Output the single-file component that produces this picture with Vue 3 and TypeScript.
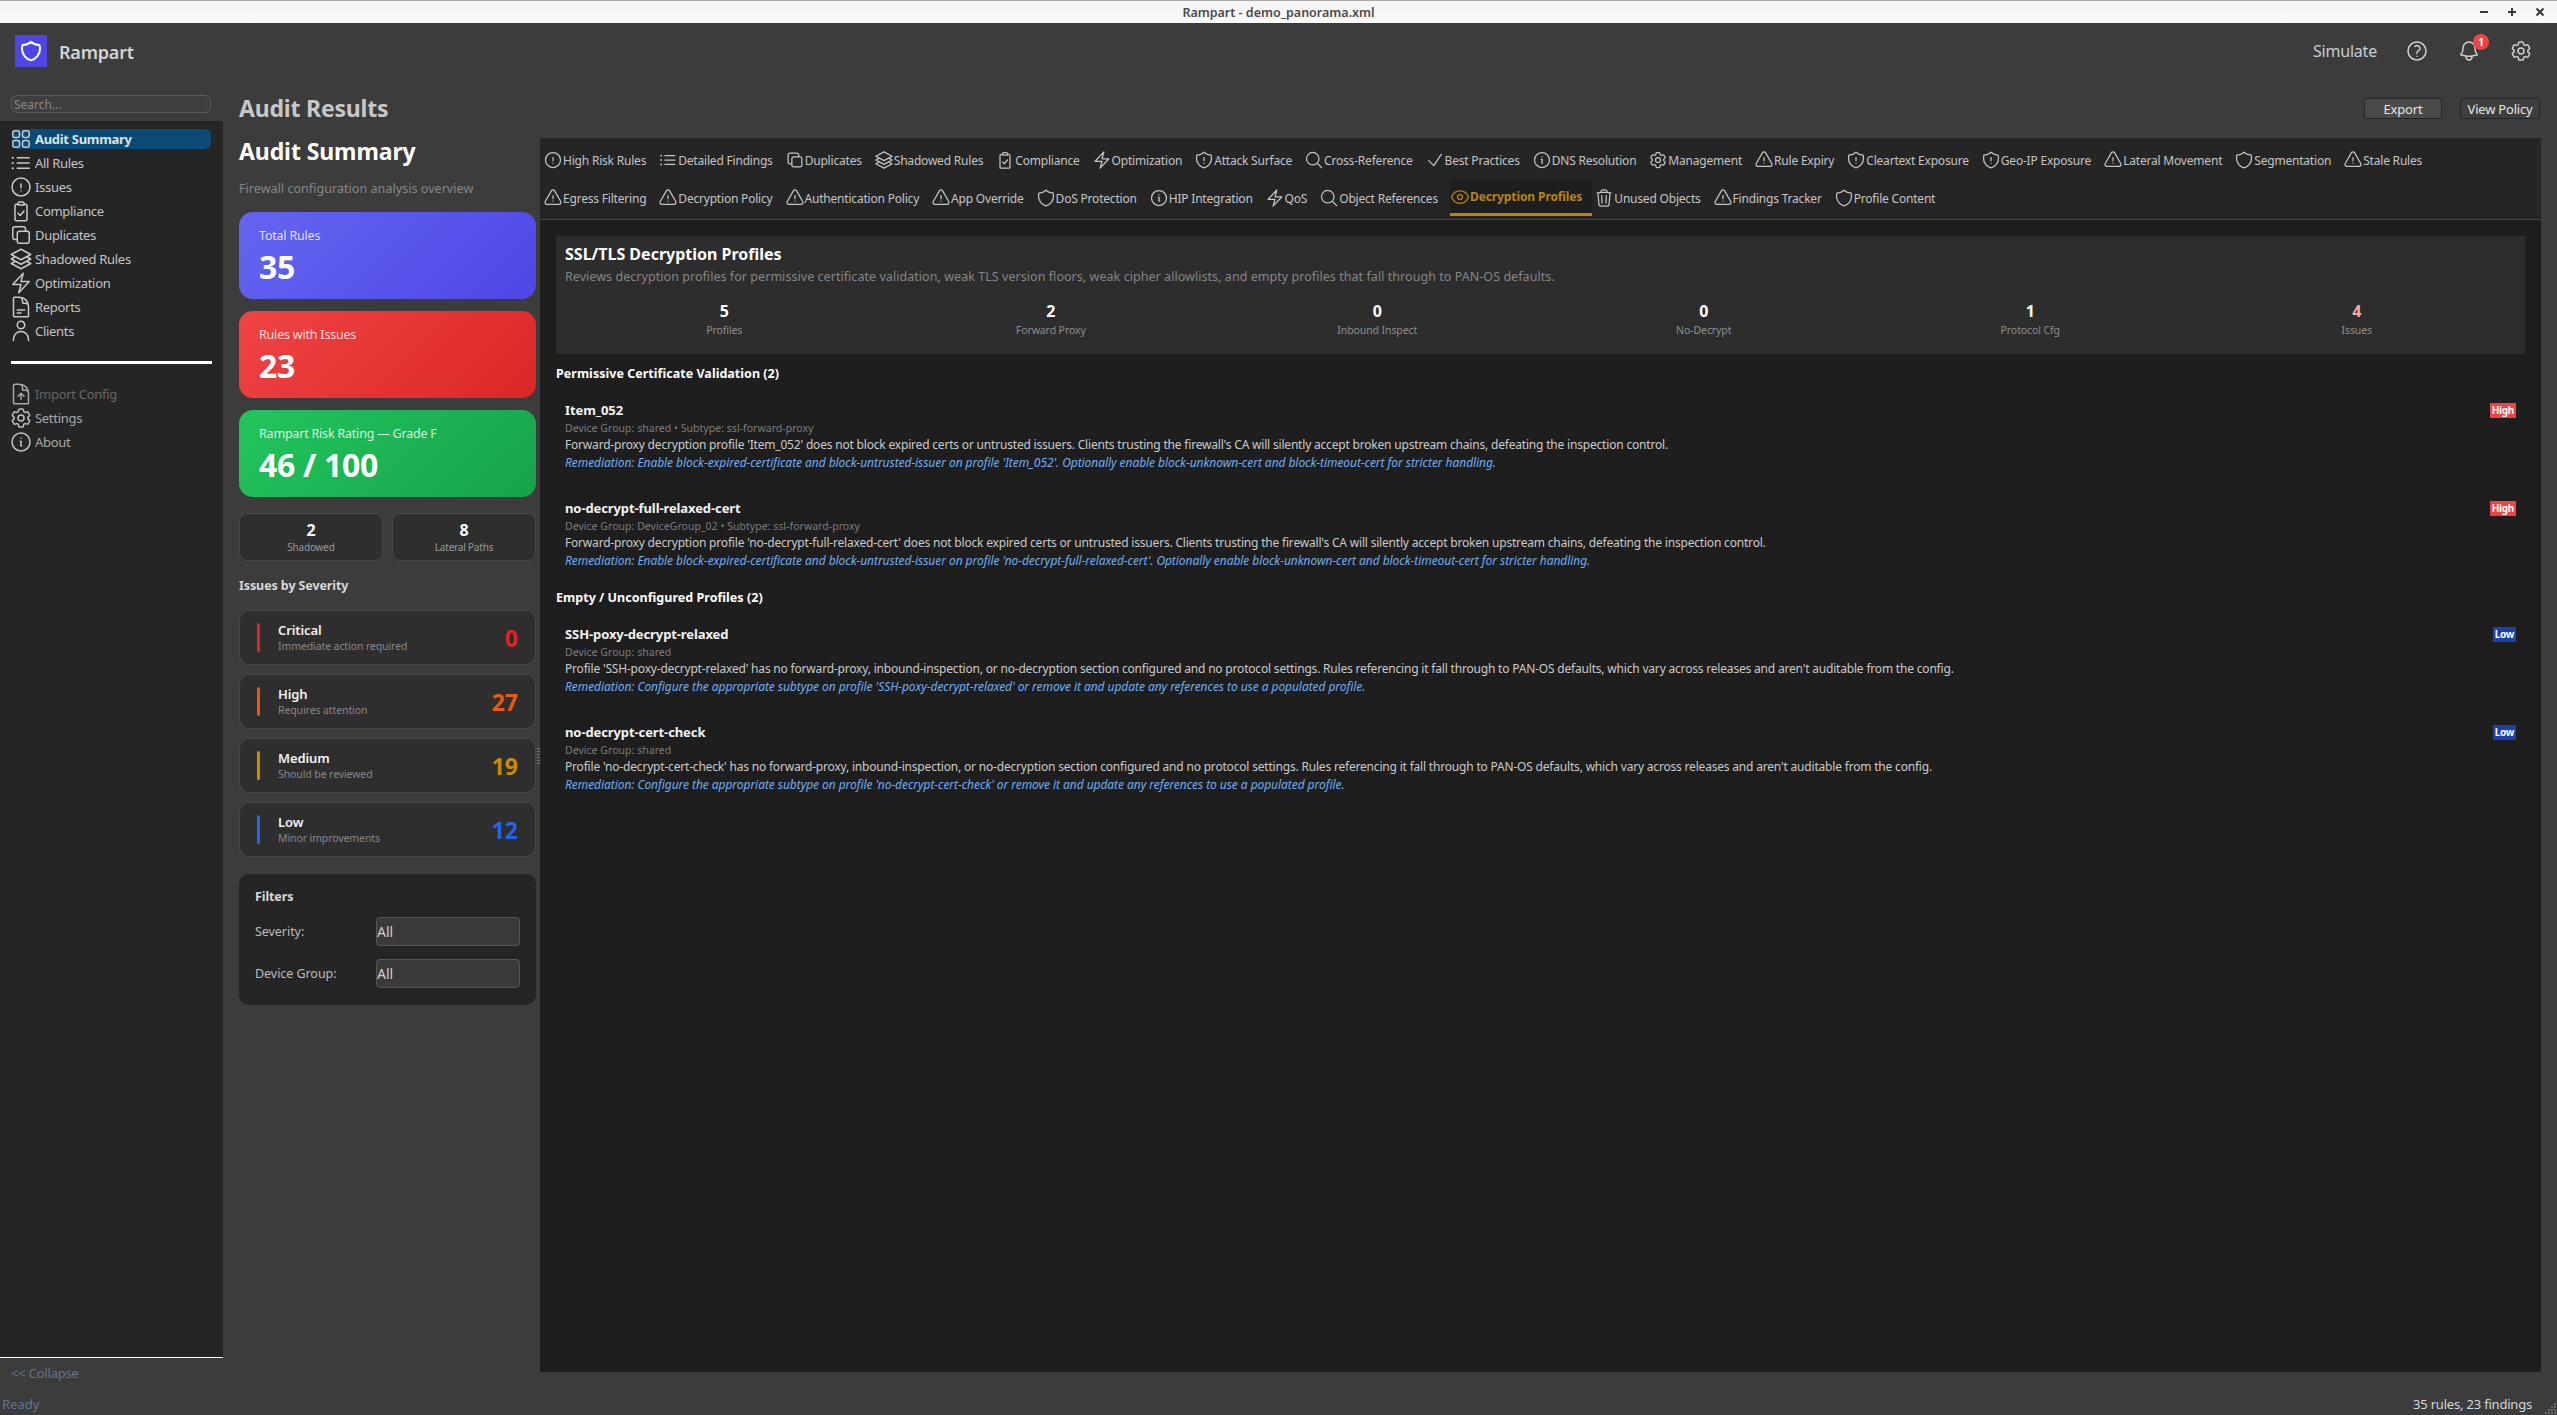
<script setup lang="ts">
interface NavItem {
  label: string
  icon: string
}
interface Tab {
  label: string
  icon: string
  active?: boolean
}
interface Finding {
  name: string
  meta: string
  text: string
  fix: string
  level: 'High' | 'Low'
}

const icons: Record<string, string> = {
  grid: 'M3.75 6A2.25 2.25 0 0 1 6 3.75h2.25A2.25 2.25 0 0 1 10.5 6v2.25a2.25 2.25 0 0 1-2.25 2.25H6a2.25 2.25 0 0 1-2.25-2.25V6ZM3.75 15.75A2.25 2.25 0 0 1 6 13.5h2.25a2.25 2.25 0 0 1 2.25 2.25V18a2.25 2.25 0 0 1-2.25 2.25H6A2.25 2.25 0 0 1 3.75 18v-2.25ZM13.5 6a2.25 2.25 0 0 1 2.25-2.25H18A2.25 2.25 0 0 1 20.25 6v2.25A2.25 2.25 0 0 1 18 10.5h-2.25a2.25 2.25 0 0 1-2.25-2.25V6ZM13.5 15.75a2.25 2.25 0 0 1 2.25-2.25H18a2.25 2.25 0 0 1 2.25 2.25V18A2.25 2.25 0 0 1 18 20.25h-2.25A2.25 2.25 0 0 1 13.5 18v-2.25Z',
  list: 'M8.25 6.75h12M8.25 12h12m-12 5.25h12M3.75 6.75h.007v.008H3.75V6.75Zm.375 0a.375.375 0 1 1-.75 0 .375.375 0 0 1 .75 0ZM3.75 12h.007v.008H3.75V12Zm.375 0a.375.375 0 1 1-.75 0 .375.375 0 0 1 .75 0Zm-.375 5.25h.007v.008H3.75v-.008Zm.375 0a.375.375 0 1 1-.75 0 .375.375 0 0 1 .75 0Z',
  alert: 'M12 9v3.75m9-.75a9 9 0 1 1-18 0 9 9 0 0 1 18 0Zm-9 3.75h.008v.008H12v-.008Z',
  clipboard: 'M9 5.25H7.5A1.5 1.5 0 0 0 6 6.75v13.5a1.5 1.5 0 0 0 1.5 1.5h9a1.5 1.5 0 0 0 1.5-1.5V6.75a1.5 1.5 0 0 0-1.5-1.5H15M9 4.5A1.5 1.5 0 0 1 10.5 3h3A1.5 1.5 0 0 1 15 4.5V6H9V4.5ZM9 14.25l2.25 2.25 3.75-4.5',
  copy: 'M16.5 8.25V6a2.25 2.25 0 0 0-2.25-2.25H6A2.25 2.25 0 0 0 3.75 6v8.25A2.25 2.25 0 0 0 6 16.5h2.25m8.25-8.25H18a2.25 2.25 0 0 1 2.25 2.25V18A2.25 2.25 0 0 1 18 20.25h-7.5A2.25 2.25 0 0 1 8.25 18v-1.5m8.25-8.25h-6a2.25 2.25 0 0 0-2.25 2.25v6',
  stack: 'M6.429 9.75 2.25 12l4.179 2.25m0-4.5 5.571 3 5.571-3m-11.142 0L2.25 7.5 12 2.25l9.75 5.25-4.179 2.25m0 0L21.75 12l-4.179 2.25m0 0 4.179 2.25L12 21.75 2.25 16.5l4.179-2.25m11.142 0-5.571 3-5.571-3',
  bolt: 'm3.75 13.5 10.5-11.25L12 10.5h8.25L9.75 21.75 12 13.5H3.75Z',
  doc: 'M19.5 14.25v-2.625a3.375 3.375 0 0 0-3.375-3.375h-1.5A1.125 1.125 0 0 1 13.5 7.125v-1.5a3.375 3.375 0 0 0-3.375-3.375H8.25m0 12.75h7.5m-7.5 3H12M10.5 2.25H5.625c-.621 0-1.125.504-1.125 1.125v17.25c0 .621.504 1.125 1.125 1.125h12.75c.621 0 1.125-.504 1.125-1.125V11.25a9 9 0 0 0-9-9Z',
  user: 'M15.75 6a3.75 3.75 0 1 1-7.5 0 3.75 3.75 0 0 1 7.5 0ZM4.5 21.5v-1.4a7.5 7.5 0 0 1 15 0v1.4',
  upload: 'M19.5 14.25v-2.625a3.375 3.375 0 0 0-3.375-3.375h-1.5A1.125 1.125 0 0 1 13.5 7.125v-1.5a3.375 3.375 0 0 0-3.375-3.375H8.25m6.75 12-3-3m0 0-3 3m3-3v6m-1.5-15H5.625c-.621 0-1.125.504-1.125 1.125v17.25c0 .621.504 1.125 1.125 1.125h12.75c.621 0 1.125-.504 1.125-1.125V11.25a9 9 0 0 0-9-9Z',
  cog: 'M9.594 3.94c.09-.542.56-.94 1.11-.94h2.593c.55 0 1.02.398 1.11.94l.213 1.281c.063.374.313.686.645.87.074.04.147.083.22.127.325.196.72.257 1.075.124l1.217-.456a1.125 1.125 0 0 1 1.37.49l1.296 2.247a1.125 1.125 0 0 1-.26 1.431l-1.003.827c-.293.241-.438.613-.43.992a7.723 7.723 0 0 1 0 .255c-.008.378.137.75.43.991l1.004.827c.424.35.534.955.26 1.43l-1.298 2.247a1.125 1.125 0 0 1-1.369.491l-1.217-.456c-.355-.133-.75-.072-1.076.124a6.47 6.47 0 0 1-.22.128c-.331.183-.581.495-.644.869l-.213 1.281c-.09.543-.56.94-1.11.94h-2.594c-.55 0-1.019-.398-1.11-.94l-.213-1.281c-.062-.374-.312-.686-.644-.87a6.52 6.52 0 0 1-.22-.127c-.325-.196-.72-.257-1.076-.124l-1.217.456a1.125 1.125 0 0 1-1.369-.49l-1.297-2.247a1.125 1.125 0 0 1 .26-1.431l1.004-.827c.292-.24.437-.613.43-.991a6.932 6.932 0 0 1 0-.255c.007-.38-.138-.751-.43-.992l-1.004-.827a1.125 1.125 0 0 1-.26-1.43l1.297-2.247a1.125 1.125 0 0 1 1.37-.491l1.216.456c.356.133.751.072 1.076-.124.072-.044.146-.086.22-.128.332-.183.582-.495.644-.869l.214-1.28ZM15 12a3 3 0 1 1-6 0 3 3 0 0 1 6 0Z',
  info: 'm11.25 11.25.041-.02a.75.75 0 0 1 1.063.852l-.708 2.836a.75.75 0 0 0 1.063.853l.041-.021M21 12a9 9 0 1 1-18 0 9 9 0 0 1 18 0Zm-9-3.75h.008v.008H12V8.25Z',
  shieldAlert: 'M12 9v3.75m0-10.036A11.959 11.959 0 0 1 3.598 6 11.99 11.99 0 0 0 3 9.75c0 5.592 3.824 10.29 9 11.622 5.176-1.332 9-6.03 9-11.622 0-1.31-.21-2.57-.598-3.75h-.152c-3.196 0-6.1-1.25-8.25-3.286Zm0 13.036h.008v.008H12v-.008Z',
  shield: 'M12 2.714A11.959 11.959 0 0 1 3.598 6 11.99 11.99 0 0 0 3 9.749c0 5.592 3.824 10.29 9 11.623 5.176-1.332 9-6.03 9-11.622 0-1.31-.21-2.571-.598-3.751h-.152c-3.196 0-6.1-1.248-8.25-3.285Z',
  search: 'm21 21-5.197-5.197m0 0A7.5 7.5 0 1 0 5.196 5.196a7.5 7.5 0 0 0 10.607 10.607Z',
  check: 'm4.5 12.75 6 6 9-13.5',
  warn: 'M12 9v3.75m-9.303 3.376c-.866 1.5.217 3.374 1.948 3.374h14.71c1.73 0 2.813-1.874 1.948-3.374L13.949 3.378c-.866-1.5-3.032-1.5-3.898 0L2.697 16.126ZM12 15.75h.007v.008H12v-.008Z',
  eye: 'M2.036 12.322a1.012 1.012 0 0 1 0-.639C3.423 7.51 7.36 4.5 12 4.5c4.638 0 8.573 3.007 9.963 7.178.07.207.07.431 0 .639C20.577 16.49 16.64 19.5 12 19.5c-4.638 0-8.573-3.007-9.963-7.178ZM15 12a3 3 0 1 1-6 0 3 3 0 0 1 6 0Z',
  trash: 'm14.74 9-.346 9m-4.788 0L9.26 9m9.968-3.21c.342.052.682.107 1.022.166m-1.022-.165L18.16 19.673a2.25 2.25 0 0 1-2.244 2.077H8.084a2.25 2.25 0 0 1-2.244-2.077L4.772 5.79m14.456 0a48.108 48.108 0 0 0-3.478-.397m-12 .562c.34-.059.68-.114 1.022-.165m0 0a48.11 48.11 0 0 1 3.478-.397m7.5 0v-.916c0-1.18-.91-2.164-2.09-2.201a51.964 51.964 0 0 0-3.32 0c-1.18.037-2.09 1.022-2.09 2.201v.916m7.5 0a48.667 48.667 0 0 0-7.5 0',
  help: 'M9.879 7.519c1.171-1.025 3.071-1.025 4.242 0 1.172 1.025 1.172 2.687 0 3.712-.203.179-.43.326-.67.442-.745.361-1.45.999-1.45 1.827v.75M21 12a9 9 0 1 1-18 0 9 9 0 0 1 18 0Zm-9 5.25h.008v.008H12v-.008Z',
  bell: 'M14.857 17.082a23.848 23.848 0 0 0 5.454-1.31A8.967 8.967 0 0 1 18 9.75V9A6 6 0 0 0 6 9v.75a8.967 8.967 0 0 1-2.312 6.022c1.733.64 3.56 1.085 5.455 1.31m5.714 0a24.255 24.255 0 0 1-5.714 0m5.714 0a3 3 0 1 1-5.714 0',
}

const navMain: NavItem[] = [
  { label: 'All Rules', icon: 'list' },
  { label: 'Issues', icon: 'alert' },
  { label: 'Compliance', icon: 'clipboard' },
  { label: 'Duplicates', icon: 'copy' },
  { label: 'Shadowed Rules', icon: 'stack' },
  { label: 'Optimization', icon: 'bolt' },
  { label: 'Reports', icon: 'doc' },
  { label: 'Clients', icon: 'user' },
]

const tabRows: Tab[][] = [
  [
    { label: 'High Risk Rules', icon: 'alert' },
    { label: 'Detailed Findings', icon: 'list' },
    { label: 'Duplicates', icon: 'copy' },
    { label: 'Shadowed Rules', icon: 'stack' },
    { label: 'Compliance', icon: 'clipboard' },
    { label: 'Optimization', icon: 'bolt' },
    { label: 'Attack Surface', icon: 'shieldAlert' },
    { label: 'Cross-Reference', icon: 'search' },
    { label: 'Best Practices', icon: 'check' },
    { label: 'DNS Resolution', icon: 'info' },
    { label: 'Management', icon: 'cog' },
    { label: 'Rule Expiry', icon: 'warn' },
    { label: 'Cleartext Exposure', icon: 'shieldAlert' },
    { label: 'Geo-IP Exposure', icon: 'shieldAlert' },
    { label: 'Lateral Movement', icon: 'warn' },
    { label: 'Segmentation', icon: 'shield' },
    { label: 'Stale Rules', icon: 'warn' },
  ],
  [
    { label: 'Egress Filtering', icon: 'warn' },
    { label: 'Decryption Policy', icon: 'warn' },
    { label: 'Authentication Policy', icon: 'warn' },
    { label: 'App Override', icon: 'warn' },
    { label: 'DoS Protection', icon: 'shield' },
    { label: 'HIP Integration', icon: 'info' },
    { label: 'QoS', icon: 'bolt' },
    { label: 'Object References', icon: 'search' },
    { label: 'Decryption Profiles', icon: 'eye', active: true },
    { label: 'Unused Objects', icon: 'trash' },
    { label: 'Findings Tracker', icon: 'warn' },
    { label: 'Profile Content', icon: 'shield' },
  ],
]

const statCards = [
  { label: 'Total Rules', value: '35', cls: 'indigo' },
  { label: 'Rules with Issues', value: '23', cls: 'red' },
  { label: 'Rampart Risk Rating — Grade F', value: '46 / 100', cls: 'green' },
]

const severities = [
  { name: 'Critical', desc: 'Immediate action required', count: 0, color: '#dc2626' },
  { name: 'High', desc: 'Requires attention', count: 27, color: '#ea580c' },
  { name: 'Medium', desc: 'Should be reviewed', count: 19, color: '#ca8a04' },
  { name: 'Low', desc: 'Minor improvements', count: 12, color: '#2563eb' },
]

const profileStats = [
  { value: 5, label: 'Profiles' },
  { value: 2, label: 'Forward Proxy' },
  { value: 0, label: 'Inbound Inspect' },
  { value: 0, label: 'No-Decrypt' },
  { value: 1, label: 'Protocol Cfg' },
  { value: 4, label: 'Issues', warn: true },
]

const breakText = (p: string) =>
  `Forward-proxy decryption profile '${p}' does not block expired certs or untrusted issuers. Clients trusting the firewall's CA will silently accept broken upstream chains, defeating the inspection control.`
const breakFix = (p: string) =>
  `Remediation: Enable block-expired-certificate and block-untrusted-issuer on profile '${p}'. Optionally enable block-unknown-cert and block-timeout-cert for stricter handling.`
const emptyText = (p: string) =>
  `Profile '${p}' has no forward-proxy, inbound-inspection, or no-decryption section configured and no protocol settings. Rules referencing it fall through to PAN-OS defaults, which vary across releases and aren't auditable from the config.`
const emptyFix = (p: string) =>
  `Remediation: Configure the appropriate subtype on profile '${p}' or remove it and update any references to use a populated profile.`

const groups: { title: string; items: Finding[] }[] = [
  {
    title: 'Permissive Certificate Validation (2)',
    items: [
      { name: 'Item_052', meta: 'Device Group: shared • Subtype: ssl-forward-proxy', text: breakText('Item_052'), fix: breakFix('Item_052'), level: 'High' },
      { name: 'no-decrypt-full-relaxed-cert', meta: 'Device Group: DeviceGroup_02 • Subtype: ssl-forward-proxy', text: breakText('no-decrypt-full-relaxed-cert'), fix: breakFix('no-decrypt-full-relaxed-cert'), level: 'High' },
    ],
  },
  {
    title: 'Empty / Unconfigured Profiles (2)',
    items: [
      { name: 'SSH-poxy-decrypt-relaxed', meta: 'Device Group: shared', text: emptyText('SSH-poxy-decrypt-relaxed'), fix: emptyFix('SSH-poxy-decrypt-relaxed'), level: 'Low' },
      { name: 'no-decrypt-cert-check', meta: 'Device Group: shared', text: emptyText('no-decrypt-cert-check'), fix: emptyFix('no-decrypt-cert-check'), level: 'Low' },
    ],
  },
]
</script>

<template>
  <div class="window">
    <div class="titlebar">
      <span class="titlebar-text">Rampart - demo_panorama.xml</span>
      <div class="win-controls">
        <svg viewBox="0 0 12 12" class="win-ctl"><path d="M2 6h8" /></svg>
        <svg viewBox="0 0 12 12" class="win-ctl"><path d="M2 6h8M6 2v8" /></svg>
        <svg viewBox="0 0 12 12" class="win-ctl"><path d="M2.5 2.5l7 7M9.5 2.5l-7 7" /></svg>
      </div>
    </div>

    <header class="topbar">
      <div class="logo">
        <svg viewBox="0 0 24 24" class="logo-icon"><path :d="icons.shield" /></svg>
      </div>
      <span class="brand">Rampart</span>
      <div class="top-actions">
        <span class="simulate">Simulate</span>
        <svg viewBox="0 0 24 24" class="top-icon"><path :d="icons.help" /></svg>
        <div class="bell-wrap">
          <svg viewBox="0 0 24 24" class="top-icon"><path :d="icons.bell" /></svg>
          <span class="bell-badge">1</span>
        </div>
        <svg viewBox="0 0 24 24" class="top-icon"><path :d="icons.cog" /></svg>
      </div>
    </header>

    <div class="workspace">
      <aside class="sidebar">
        <input class="search" placeholder="Search..." />
        <nav class="nav-panel">
          <div class="nav-item active">
            <svg viewBox="0 0 24 24" class="nav-icon"><path :d="icons.grid" /></svg>
            <span>Audit Summary</span>
          </div>
          <div v-for="item in navMain" :key="item.label" class="nav-item">
            <svg viewBox="0 0 24 24" class="nav-icon"><path :d="icons[item.icon]" /></svg>
            <span>{{ item.label }}</span>
          </div>
          <div class="nav-sep"></div>
          <div class="nav-item disabled">
            <svg viewBox="0 0 24 24" class="nav-icon"><path :d="icons.upload" /></svg>
            <span>Import Config</span>
          </div>
          <div class="nav-item dim">
            <svg viewBox="0 0 24 24" class="nav-icon"><path :d="icons.cog" /></svg>
            <span>Settings</span>
          </div>
          <div class="nav-item dim">
            <svg viewBox="0 0 24 24" class="nav-icon"><path :d="icons.info" /></svg>
            <span>About</span>
          </div>
        </nav>
        <div class="collapse">&lt;&lt; Collapse</div>
      </aside>

      <main class="content">
        <div class="content-head">
          <h1 class="page-title">Audit Results</h1>
          <div class="head-buttons">
            <button class="btn btn-export">Export</button>
            <button class="btn">View Policy</button>
          </div>
        </div>

        <div class="columns">
          <section class="summary">
            <h2 class="summary-title">Audit Summary</h2>
            <p class="summary-sub">Firewall configuration analysis overview</p>

            <div class="stat-cards">
              <div v-for="card in statCards" :key="card.label" class="stat-card" :class="card.cls">
                <div class="stat-label">{{ card.label }}</div>
                <div class="stat-value">{{ card.value }}</div>
              </div>
            </div>

            <div class="mini-row">
              <div class="mini-card">
                <div class="mini-value">2</div>
                <div class="mini-label">Shadowed</div>
              </div>
              <div class="mini-card">
                <div class="mini-value">8</div>
                <div class="mini-label">Lateral Paths</div>
              </div>
            </div>

            <h3 class="sev-title">Issues by Severity</h3>
            <div class="sev-list">
              <div v-for="sev in severities" :key="sev.name" class="sev-card">
                <span class="sev-bar" :style="{ background: sev.color }"></span>
                <div class="sev-text">
                  <div class="sev-name">{{ sev.name }}</div>
                  <div class="sev-desc">{{ sev.desc }}</div>
                </div>
                <span class="sev-count" :style="{ color: sev.color }">{{ sev.count }}</span>
              </div>
            </div>

            <div class="filters">
              <div class="filters-title">Filters</div>
              <div class="filter-row">
                <label>Severity:</label>
                <select class="filter-select"><option>All</option></select>
              </div>
              <div class="filter-row">
                <label>Device Group:</label>
                <select class="filter-select"><option>All</option></select>
              </div>
            </div>
          </section>

          <div class="splitter"><span class="grip"></span></div>

          <section class="panel">
            <div class="tabs">
              <div v-for="(row, i) in tabRows" :key="i" class="tab-row">
                <div v-for="tab in row" :key="tab.label" class="tab" :class="{ active: tab.active }">
                  <svg viewBox="0 0 24 24" class="tab-icon"><path :d="icons[tab.icon]" /></svg>
                  <span>{{ tab.label }}</span>
                </div>
              </div>
            </div>

            <div class="tab-body">
              <div class="intro">
                <h2 class="intro-title">SSL/TLS Decryption Profiles</h2>
                <p class="intro-desc">Reviews decryption profiles for permissive certificate validation, weak TLS version floors, weak cipher allowlists, and empty profiles that fall through to PAN-OS defaults.</p>
                <div class="intro-stats">
                  <div v-for="s in profileStats" :key="s.label" class="intro-stat">
                    <div class="intro-value" :class="{ warn: s.warn }">{{ s.value }}</div>
                    <div class="intro-label">{{ s.label }}</div>
                  </div>
                </div>
              </div>

              <div v-for="group in groups" :key="group.title" class="group">
                <h3 class="group-title">{{ group.title }}</h3>
                <div v-for="item in group.items" :key="item.name" class="finding">
                  <div class="finding-head">
                    <span class="finding-name">{{ item.name }}</span>
                    <span class="level" :class="item.level === 'High' ? 'level-high' : 'level-low'">{{ item.level }}</span>
                  </div>
                  <div class="finding-meta">{{ item.meta }}</div>
                  <div class="finding-text">{{ item.text }}</div>
                  <div class="finding-fix">{{ item.fix }}</div>
                </div>
              </div>
            </div>
          </section>
        </div>
      </main>
    </div>

    <footer class="statusbar">
      <span class="status-left">Ready</span>
      <span class="status-right">35 rules, 23 findings</span>
      <svg class="size-grip" viewBox="0 0 12 12">
        <rect x="9" y="0" width="2" height="2" />
        <rect x="6" y="3" width="2" height="2" /><rect x="9" y="3" width="2" height="2" />
        <rect x="3" y="6" width="2" height="2" /><rect x="6" y="6" width="2" height="2" /><rect x="9" y="6" width="2" height="2" />
        <rect x="0" y="9" width="2" height="2" /><rect x="3" y="9" width="2" height="2" /><rect x="6" y="9" width="2" height="2" /><rect x="9" y="9" width="2" height="2" />
      </svg>
    </footer>
  </div>
</template>

<style>
html,
body {
  margin: 0;
  background: #3c3c3c;
  overflow: hidden;
}
</style>

<style scoped>
* {
  box-sizing: border-box;
}
svg path {
  fill: none;
  stroke: currentColor;
  stroke-width: 1.5;
  stroke-linecap: round;
  stroke-linejoin: round;
}

.window {
  width: 2557px;
  height: 1415px;
  display: flex;
  flex-direction: column;
  background: #3c3c3c;
  font-family: "Noto Sans", sans-serif;
  color: #ccc;
  overflow: hidden;
}

/* title bar */
.titlebar {
  height: 23px;
  flex: none;
  position: relative;
  display: flex;
  align-items: center;
  justify-content: center;
  border-top: 1px solid #a8a8a8;
  background: linear-gradient(#f4f4f4, #fbfbfb);
}
.titlebar-text {
  font-size: 12.5px;
  font-weight: 600;
  color: #4a4a4a;
}
.win-controls {
  position: absolute;
  right: 11px;
  top: 5px;
  display: flex;
  gap: 16px;
}
.win-ctl {
  width: 12px;
  height: 12px;
}
.win-ctl path {
  stroke: #3a3a3a;
  stroke-width: 2;
  stroke-linecap: butt;
}

/* header */
.topbar {
  height: 72px;
  flex: none;
  display: flex;
  align-items: flex-start;
  padding: 12px 24px 0 15px;
}
.logo {
  width: 32px;
  height: 32px;
  background: #4f46e5;
  display: flex;
  align-items: center;
  justify-content: center;
}
.logo-icon {
  width: 24px;
  height: 24px;
  color: #fff;
}
.logo-icon path {
  stroke-width: 2;
}
.brand {
  margin-left: 12px;
  font-size: 18px;
  line-height: 34px;
  font-weight: 600;
  color: #d4d4d4;
  letter-spacing: -0.2px;
}
.top-actions {
  margin-left: auto;
  display: flex;
  align-items: center;
  gap: 28px;
  height: 32px;
}
.simulate {
  font-size: 16px;
  color: #c5ccd4;
  letter-spacing: -0.2px;
}
.top-icon {
  width: 24px;
  height: 24px;
  color: #d0d0d0;
  display: block;
}
.bell-wrap {
  position: relative;
}
.bell-badge {
  position: absolute;
  left: 16px;
  top: -5px;
  width: 16px;
  height: 16px;
  border-radius: 50%;
  background: #ef4444;
  color: #fff;
  font-size: 10px;
  font-weight: 700;
  line-height: 16px;
  text-align: center;
}

/* body */
.workspace {
  flex: 1;
  display: flex;
  min-height: 0;
}

/* sidebar */
.sidebar {
  width: 223px;
  flex: none;
  display: flex;
  flex-direction: column;
}
.search {
  width: 200px;
  height: 18px;
  margin: 0 0 8px 11px;
  padding: 0 2px;
  background: #3f3f3f;
  border: 1px solid #5a5a5a;
  border-radius: 6px;
  font-family: inherit;
  font-size: 12px;
  color: #ccc;
  outline: none;
}
.search::placeholder {
  color: #888;
}
.nav-panel {
  flex: 1;
  background: #252525;
  border-bottom: 1px solid #fff;
  padding: 8px 12px 0;
  display: flex;
  flex-direction: column;
  gap: 4px;
}
.nav-item {
  height: 20px;
  display: flex;
  align-items: center;
  gap: 2px;
  font-size: 13px;
  color: #c4c4c4;
  border-radius: 6px;
  letter-spacing: -0.3px;
}
.nav-item.active {
  background: #0b4a75;
  color: #d8e4ec;
  font-weight: 700;
}
.nav-item.disabled {
  color: #666;
}
.nav-item.dim {
  color: #a8a8a8;
}
.nav-icon {
  width: 24px;
  height: 24px;
  margin: -2px 0 -2px -3px;
  flex: none;
  color: #c8c8c8;
}
.nav-item.disabled .nav-icon {
  color: #a8a8a8;
}
.nav-item.dim .nav-icon {
  color: #c0c0c0;
}
.nav-sep {
  height: 3px;
  background: #fff;
  margin: 16px -1px 16px;
}
.collapse {
  height: 32px;
  flex: none;
  line-height: 30px;
  padding-left: 11px;
  font-size: 13px;
  color: #64748b;
  letter-spacing: -0.2px;
}

/* main */
.content {
  flex: 1;
  min-width: 0;
  display: flex;
  flex-direction: column;
  padding: 0 16px 18px;
}
.content-head {
  height: 43px;
  flex: none;
  display: flex;
  align-items: flex-start;
  justify-content: space-between;
}
.page-title {
  margin: 0;
  font-size: 23px;
  font-weight: 700;
  line-height: 26px;
  color: #c8c8c8;
  letter-spacing: -0.2px;
}
.head-buttons {
  display: flex;
  gap: 18px;
  margin: 3px 1px 0 0;
}
.btn {
  height: 21px;
  padding: 0;
  width: 80px;
  background: #3e3e3e;
  border: 1px solid #262626;
  border-radius: 3px;
  font-family: inherit;
  font-size: 13px;
  color: #e6e6e6;
  letter-spacing: -0.2px;
}
.btn-export {
  width: 78px;
  background: #4a4a4a;
}
.columns {
  flex: 1;
  min-height: 0;
  display: flex;
}

/* left summary column */
.summary {
  width: 297px;
  flex: none;
}
.summary-title {
  margin: 0;
  height: 28px;
  font-size: 23px;
  line-height: 26px;
  font-weight: 700;
  color: #fff;
  letter-spacing: -0.1px;
}
.summary-sub {
  margin: 14px 0;
  font-size: 12.5px;
  line-height: 18px;
  color: #868686;
  letter-spacing: 0.05px;
}
.stat-cards {
  display: flex;
  flex-direction: column;
  gap: 12px;
}
.stat-card {
  height: 87px;
  border-radius: 14px;
  padding: 15px 20px;
  color: #fff;
}
.stat-card.indigo {
  background: linear-gradient(135deg, #6366f1, #4f46e5);
}
.stat-card.red {
  background: linear-gradient(135deg, #ef4444, #dc2626);
}
.stat-card.green {
  background: linear-gradient(135deg, #22c55e, #16a34a);
}
.stat-label {
  font-size: 12.5px;
  line-height: 18px;
  color: rgba(255, 255, 255, 0.82);
  letter-spacing: -0.2px;
}
.stat-value {
  margin-top: 4px;
  font-size: 32px;
  line-height: 36px;
  font-weight: 700;
  letter-spacing: -0.3px;
}
.mini-row {
  display: flex;
  gap: 9px;
  margin-top: 16px;
}
.mini-card {
  flex: 1;
  height: 48px;
  background: #2e2e2e;
  border: 1px solid #484848;
  border-radius: 8px;
  text-align: center;
  padding-top: 6px;
}
.mini-value {
  font-size: 16px;
  line-height: 20px;
  font-weight: 700;
  color: #fff;
}
.mini-label {
  font-size: 10px;
  line-height: 14px;
  color: #999;
  letter-spacing: -0.2px;
}
.sev-title {
  margin: 16px 0 15px;
  font-size: 12.5px;
  line-height: 18px;
  font-weight: 700;
  color: #d8d8d8;
  letter-spacing: -0.1px;
}
.sev-list {
  display: flex;
  flex-direction: column;
  gap: 9px;
}
.sev-card {
  height: 55px;
  display: flex;
  align-items: center;
  padding: 0 17px;
  background: #2e2e2e;
  border: 1px solid #484848;
  border-radius: 10px;
}
.sev-bar {
  width: 3px;
  height: 29px;
  border-radius: 2px;
  flex: none;
}
.sev-text {
  margin-left: 18px;
  flex: 1;
}
.sev-name {
  font-size: 13px;
  line-height: 18px;
  font-weight: 600;
  color: #f2f2f2;
  letter-spacing: -0.1px;
}
.sev-desc {
  font-size: 10.5px;
  line-height: 15px;
  color: #888;
  letter-spacing: -0.1px;
}
.sev-count {
  font-size: 23px;
  font-weight: 700;
  line-height: 28px;
}
.filters {
  margin-top: 17px;
  height: 131px;
  background: #252525;
  border-radius: 10px;
  padding: 14px 16px;
}
.filters-title {
  font-size: 12.5px;
  line-height: 18px;
  font-weight: 700;
  color: #d8d8d8;
  letter-spacing: -0.1px;
  margin-bottom: 11px;
}
.filter-row {
  height: 29px;
  display: flex;
  align-items: center;
  margin-bottom: 13px;
  font-size: 12.5px;
  color: #bcbcbc;
  letter-spacing: -0.05px;
}
.filter-row label {
  width: 121px;
  flex: none;
}
.filter-select {
  width: 144px;
  height: 29px;
  appearance: none;
  padding: 0;
  background: #3a3a3a;
  border: 1px solid #555;
  border-radius: 4px;
  font-family: inherit;
  font-size: 14px;
  color: #cfcfcf;
}

/* splitter */
.splitter {
  width: 4px;
  flex: none;
  padding-top: 610px;
}
.grip {
  display: block;
  width: 3px;
  height: 16px;
  margin-left: 1px;
  background: repeating-linear-gradient(#777 0 1px, transparent 1px 3px);
}

/* right panel */
.panel {
  flex: 1;
  min-width: 0;
  display: flex;
  flex-direction: column;
  background: #1e1e1e;
}
.tabs {
  height: 82px;
  flex: none;
  padding: 4px 0 0 3px;
  background: #252525;
  border-bottom: 1px solid #444;
  display: flex;
  flex-direction: column;
  gap: 2px;
}
.tab-row {
  display: flex;
  gap: 2px;
}
.tab {
  height: 36px;
  display: flex;
  align-items: center;
  padding-right: 10px;
  font-size: 12px;
  color: #c4c4c4;
  letter-spacing: -0.2px;
}
.tab.active {
  background: #1e1e1e;
  border-bottom: 3px solid #b8860b;
  color: #b8860b;
  font-weight: 700;
  letter-spacing: -0.1px;
}
.tab-icon {
  width: 20px;
  height: 20px;
  flex: none;
}
.tab-body {
  flex: 1;
  min-height: 0;
  padding: 16px;
}
.intro {
  height: 118px;
  background: #2d2d2d;
  padding: 7px 9px 0;
}
.intro-title {
  margin: 0;
  font-size: 16px;
  line-height: 22px;
  font-weight: 700;
  color: #fff;
  letter-spacing: 0;
}
.intro-desc {
  margin: 3px 0 0;
  font-size: 12.5px;
  line-height: 18px;
  color: #858585;
  letter-spacing: 0.05px;
}
.intro-stats {
  display: grid;
  grid-template-columns: repeat(6, 1fr);
  margin: 15px -4px 0;
  text-align: center;
}
.intro-value {
  font-size: 16px;
  line-height: 20px;
  font-weight: 700;
  color: #fff;
}
.intro-value.warn {
  color: #f8a5a5;
}
.intro-label {
  margin-top: 1px;
  font-size: 10.5px;
  line-height: 16px;
  color: #8e8e8e;
  letter-spacing: -0.1px;
}
.group-title {
  margin: 11px 0 18px;
  font-size: 12.5px;
  line-height: 18px;
  font-weight: 700;
  color: #fff;
  letter-spacing: 0.03px;
}
.group + .group .group-title {
  margin-top: 19px;
}
.finding {
  padding: 0 9px;
  margin-bottom: 27px;
}
.group .finding:last-child {
  margin-bottom: 0;
}
.finding-head {
  height: 18px;
  display: flex;
  justify-content: space-between;
  align-items: center;
}
.finding-name {
  font-size: 13px;
  font-weight: 700;
  color: #f4f4f4;
  letter-spacing: -0.1px;
}
.level {
  height: 15px;
  padding: 0 2px;
  font-size: 10px;
  line-height: 15px;
  font-weight: 700;
  color: #fff;
  letter-spacing: -0.3px;
}
.level-high {
  background: #ef4444;
}
.level-low {
  background: #1e40af;
}
.finding-meta {
  margin-top: 1px;
  font-size: 10.5px;
  line-height: 16px;
  color: #7c7c7c;
  letter-spacing: 0.03px;
}
.finding-text {
  font-size: 12px;
  line-height: 17px;
  color: #cacaca;
  letter-spacing: -0.19px;
}
.finding-fix {
  margin-top: 1px;
  font-size: 12px;
  line-height: 18px;
  font-style: italic;
  color: #70aef5;
  letter-spacing: -0.06px;
}

/* status bar */
.statusbar {
  height: 25px;
  flex: none;
  position: relative;
  display: flex;
  justify-content: space-between;
  align-items: center;
  padding: 2px 25px 0 2px;
  font-size: 13px;
}
.status-left {
  color: #64748b;
}
.status-right {
  color: #d0d6de;
  letter-spacing: -0.2px;
}
.size-grip {
  position: absolute;
  right: 0;
  bottom: 0;
  width: 12px;
  height: 12px;
  fill: #6a6a6a;
}
</style>
